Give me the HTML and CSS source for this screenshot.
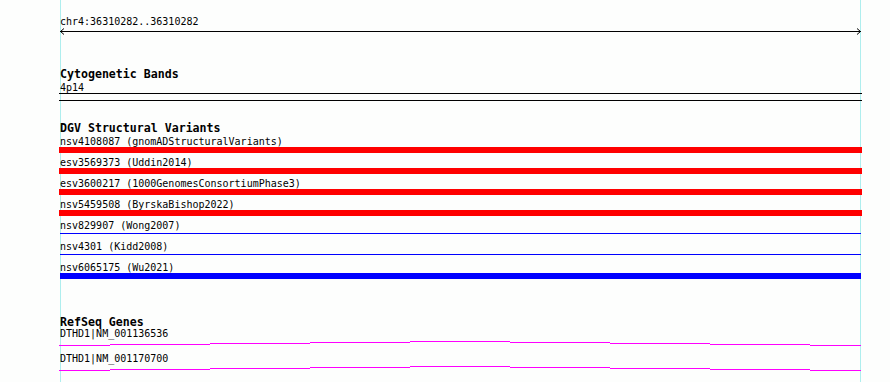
FILE: index.html
```html
<!DOCTYPE html>
<html lang="en">
<head>
    <meta charset="UTF-8">
    <meta name="viewport" content="width=device-width, initial-scale=1.0">
    <title>chr4:36310282..36310282</title>
    <link rel="stylesheet" href="styles.css">
</head>
<body>
    <div class="view">
        <div class="ruler">
            <div class="label locus">chr4:36310282..36310282</div>
            <svg class="axis" width="803" height="7" viewBox="0 0 803 7">
                <path d="M1 3.5H802M5 0.5L1.5 3.5L5 6.5M798 0.5L801.5 3.5L798 6.5" fill="none" stroke="#000" stroke-width="1"/>
            </svg>
        </div>

        <section class="track cyto">
            <h2>Cytogenetic Bands</h2>
            <div class="label">4p14</div>
            <div class="band"></div>
        </section>

        <section class="track dgv">
            <h2>DGV Structural Variants</h2>
            <div class="feature">
                <div class="label">nsv4108087 (gnomADStructuralVariants)</div>
                <div class="bar loss"></div>
            </div>
            <div class="feature">
                <div class="label">esv3569373 (Uddin2014)</div>
                <div class="bar loss"></div>
            </div>
            <div class="feature">
                <div class="label">esv3600217 (1000GenomesConsortiumPhase3)</div>
                <div class="bar loss"></div>
            </div>
            <div class="feature">
                <div class="label">nsv5459508 (ByrskaBishop2022)</div>
                <div class="bar loss"></div>
            </div>
            <div class="feature">
                <div class="label">nsv829907 (Wong2007)</div>
                <div class="bar gain thin"></div>
            </div>
            <div class="feature">
                <div class="label">nsv4301 (Kidd2008)</div>
                <div class="bar gain thin"></div>
            </div>
            <div class="feature">
                <div class="label">nsv6065175 (Wu2021)</div>
                <div class="bar gain"></div>
            </div>
        </section>

        <section class="track genes">
            <h2>RefSeq Genes</h2>
            <div class="gene">
                <div class="label">DTHD1|NM_001136536</div>
                <svg class="gene-line" width="803" height="8" viewBox="0 0 803 8">
                    <path d="M0 6.5H51M51 5.5H151M151 4.5H251M251 3.5H351M351 2.5H451M451 3.5H551M551 4.5H651M651 5.5H751M751 6.5H802" fill="none" stroke="#ff00ff" stroke-width="1"/>
                </svg>
            </div>
            <div class="gene">
                <div class="label">DTHD1|NM_001170700</div>
                <svg class="gene-line" width="803" height="8" viewBox="0 0 803 8">
                    <path d="M0 6.5H51M51 5.5H151M151 4.5H251M251 3.5H351M351 2.5H451M451 3.5H551M551 4.5H651M651 5.5H751M751 6.5H802" fill="none" stroke="#ff00ff" stroke-width="1"/>
                </svg>
            </div>
        </section>
    </div>
</body>
</html>
```

FILE: styles.css
```css
html {
    height: 100%;
}

body {
    margin: 0;
    min-height: 100%;
    font-family: "DejaVu Sans Mono", "Liberation Mono", monospace;
    color: #000;
    background:
        linear-gradient(#aeeeee, #aeeeee) 60px 0 / 1px 100% no-repeat,
        linear-gradient(#aeeeee, #aeeeee) 860px 0 / 1px 100% no-repeat,
        #fdfefd;
}

.view {
    margin-left: 59px;
    width: 803px;
    padding-top: 16px;
}

.label {
    font-size: 10px;
    line-height: 11px;
    height: 11px;
    padding-left: 1px;
    white-space: nowrap;
}

.axis {
    display: block;
    margin-top: 1px;
}

.track h2 {
    margin: 0 0 2px;
    padding-left: 1px;
    font-size: 11.6px;
    line-height: 12px;
    height: 12px;
    font-weight: bold;
}

.cyto {
    margin-top: 33px;
}

.band {
    height: 6px;
    border-top: 1px solid #000;
    border-bottom: 1px solid #000;
}

.dgv {
    margin-top: 21px;
}

.feature {
    padding-bottom: 4px;
}

.bar {
    height: 6px;
}

.bar.loss {
    background-color: #ff0000;
}

.bar.gain {
    background-color: #0000ff;
    margin: 0 1px;
}

.bar.thin {
    background: linear-gradient(#0000ff, #0000ff) 0 2px / 100% 1px no-repeat;
}

.genes {
    margin-top: 33px;
}

.genes h2 {
    margin-bottom: 0;
}

.gene {
    padding-bottom: 6px;
}

.gene-line {
    display: block;
}
```
